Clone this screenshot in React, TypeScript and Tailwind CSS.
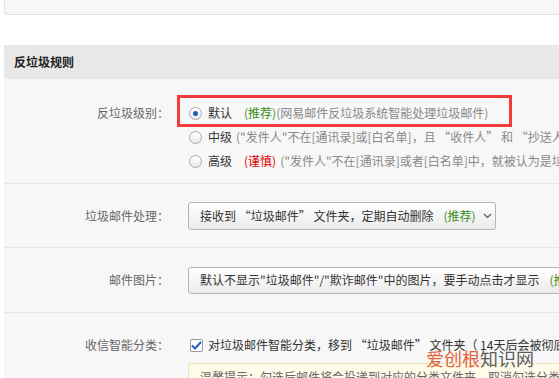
import React from "react";

const font = { fontFamily: '"Noto Sans CJK SC", "Noto Sans", sans-serif' };

function Radio({ checked }: { checked?: boolean }) {
  return (
    <span className="mr-[6px] flex h-[13px] w-[13px] shrink-0 items-center justify-center rounded-full border border-[#a9a9a9] bg-gradient-to-b from-white to-[#ececec]">
      {checked && <span className="h-[5px] w-[5px] rounded-full bg-[#1d5fb8]" />}
    </span>
  );
}

function Label({ children }: { children: React.ReactNode }) {
  return <div className="w-[165px] shrink-0 text-right text-[#666]">{children}</div>;
}

export default function App() {
  return (
    <div className="relative h-[378px] w-[559px] overflow-hidden bg-white pl-[4px] text-[12px] text-[#333]" style={font}>
      <div className="w-[700px]">
        {/* previous card */}
        <div className="h-[15px] rounded-b-[4px] border border-t-0 border-[#e2e2e2] bg-[#f7f7f7]" />

        <div className="mt-[30px] flex h-[34px] items-center bg-[#e8e8e8] pl-[10px] font-bold text-[#222]">
          反垃圾规则
        </div>

        <div className="bg-[#f7f7f7]">
          {/* 反垃圾级别 */}
          <div className="flex pt-[22px] pb-[10px]">
            <Label>
              <div className="flex h-[24px] items-center justify-end">反垃圾级别：</div>
            </Label>
            <div className="ml-[20px] flex flex-col whitespace-nowrap">
              <div className="flex h-[24px] items-center">
                <Radio checked />
                <span>默认</span>
                <span className="ml-[12px] text-[#3a8f1c]">(推荐)</span>
                <span className="text-[#888]">(网易邮件反垃圾系统智能处理垃圾邮件)</span>
              </div>
              <div className="flex h-[24px] items-center">
                <Radio />
                <span>中级</span>
                <span className="ml-[4px] text-[#888]">
                  ("发件人"不在[通讯录]或[白名单]，且 “收件人” 和 “抄送人” 中都没有你的邮箱地址)
                </span>
              </div>
              <div className="flex h-[24px] items-center">
                <Radio />
                <span>高级</span>
                <span className="ml-[12px] text-[#e00000]">(谨慎)</span>
                <span className="ml-[4px] text-[#888]">("发件人"不在[通讯录]或者[白名单]中，就被认为是垃圾邮件)</span>
              </div>
            </div>
          </div>

          {/* 垃圾邮件处理 */}
          <div className="flex h-[64px] items-center border-t border-[#e6e6e6]">
            <Label>垃圾邮件处理：</Label>
            <div className="ml-[19px] flex h-[28px] w-[308px] items-center whitespace-nowrap rounded-[3px] border border-[#b4b4b4] bg-gradient-to-b from-white to-[#ebebeb] pl-[11px]">
              <span>接收到 “垃圾邮件” 文件夹，定期自动删除</span>
              <span className="ml-[10px] text-[#3a8f1c]">(推荐)</span>
              <svg className="ml-[7px]" width="9" height="6" viewBox="0 0 9 6">
                <path d="M1 1l3.5 3.5L8 1" fill="none" stroke="#555" strokeWidth="1.2" />
              </svg>
            </div>
          </div>

          {/* 邮件图片 */}
          <div className="flex h-[65px] items-center border-t border-[#e6e6e6]">
            <Label>邮件图片：</Label>
            <div className="ml-[19px] flex h-[27px] w-[420px] items-center whitespace-nowrap rounded-[3px] border border-[#b4b4b4] bg-gradient-to-b from-white to-[#ebebeb] pl-[11px]">
              <span>默认不显示"垃圾邮件"/"欺诈邮件"中的图片，要手动点击才显示</span>
              <span className="ml-[10px] text-[#3a8f1c]">(推荐)</span>
            </div>
          </div>

          {/* 收信智能分类 */}
          <div className="flex border-t border-[#e6e6e6] pt-[25px]">
            <Label>
              <div className="flex h-[14px] items-center justify-end">收信智能分类：</div>
            </Label>
            <div className="ml-[21px] flex flex-col whitespace-nowrap">
              <div className="flex h-[14px] items-center">
                <span className="mr-[5px] flex h-[13px] w-[13px] items-center justify-center rounded-[2px] border border-[#9a9a9a] bg-white">
                  <svg width="11" height="9" viewBox="0 0 11 9">
                    <path d="M1 4.5l3 3L10 1" fill="none" stroke="#2463c0" strokeWidth="2" />
                  </svg>
                </span>
                <span>对垃圾邮件智能分类，移到 “垃圾邮件” 文件夹（ 14天后会被彻底删除）</span>
              </div>
              <div className="-ml-[2px] mt-[11px] h-[40px] w-[400px] border border-[#efe3b8] bg-[#fffbe9] px-[11px] pt-[4px] text-[#666]">
                温馨提示：勾选后邮件将会投递到对应的分类文件夹，取消勾选分类后
              </div>
            </div>
          </div>
        </div>
      </div>

      {/* annotation */}
      <div className="absolute left-[177px] top-[95px] h-[32px] w-[335px] border-[3px] border-[#f23b3b]" />

      {/* watermark */}
      <div className="absolute left-[426px] top-[349px] text-[18px] leading-none">
        <span className="text-[#e2643a]">爱创根</span>
        <span className="text-[#5c5c5c]">知识网</span>
      </div>
    </div>
  );
}
